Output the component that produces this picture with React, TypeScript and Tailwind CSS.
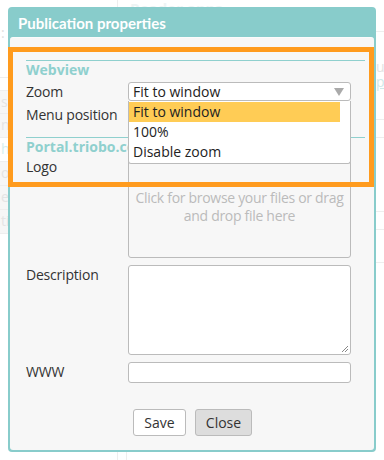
import React from 'react';

// Faint page content behind the modal: only thin slivers show at the edges.
function BackgroundPage() {
  return (
    <div className="flex h-[460px] w-[384px] text-[14px] text-[#e4e4e4]">
      <div className="flex w-[10px] flex-col overflow-hidden pt-[22px]">
        <div className="whitespace-nowrap pl-[1px] text-[#e0e0e0]">: (</div>
        <div className="mt-[34px] h-px bg-[#eeeeee]" />
        <div className="mt-[12px] h-[24px] border-y border-[#eeeeee] bg-[#f6f6f6] pl-[1px] leading-[22px]">s</div>
        <div className="h-[24px] border-b border-[#eeeeee] bg-[#f6f6f6] pl-[1px] leading-[22px]">n</div>
        <div className="h-[24px] border-b border-[#eeeeee] pl-[1px] leading-[22px] text-[#d5eeee]">h</div>
        <div className="h-[24px] border-b border-[#eeeeee] bg-[#f6f6f6] pl-[1px] leading-[22px]">op</div>
        <div className="h-[24px] border-b border-[#eeeeee] bg-[#f6f6f6] pl-[1px] leading-[22px]">er</div>
        <div className="h-[24px] border-b border-[#eeeeee] bg-[#f6f6f6] pl-[1px] leading-[22px]">ti</div>
      </div>
      <div className="flex flex-1 flex-col justify-between">
        <div className="flex h-[16px] items-end">
          <div className="ml-[107px] h-full w-px bg-[#eeeeee]" />
          <div className="ml-[12px] text-[15px] font-bold leading-none text-[#eef4f4]">Reader apps</div>
        </div>
        <div className="flex h-[9px]">
          <div className="ml-[107px] h-full w-px bg-[#eeeeee]" />
          <div className="ml-[8px] h-full w-px bg-[#eeeeee]" />
        </div>
      </div>
      <div className="flex w-[8px] flex-col overflow-hidden">
        <div className="mt-[31px] h-px bg-[#eeeeee]" />
        <div className="mt-[27px] whitespace-nowrap text-[#e4e4e4] leading-[16px]">ub</div>
        <div className="whitespace-nowrap leading-[14px] text-[#cfeaea] underline">pp</div>
        <div className="mt-[30px] h-px bg-[#eeeeee]" />
        <div className="mt-[17px] h-px bg-[#eeeeee]" />
        <div className="mt-[73px] h-px bg-[#eeeeee]" />
        <div className="mt-[17px] h-px bg-[#eeeeee]" />
        <div className="mt-[32px] h-px bg-[#eeeeee]" />
      </div>
    </div>
  );
}

function SectionTitle({ children }: { children: React.ReactNode }) {
  return (
    <div className="overflow-hidden whitespace-nowrap border-t border-[#8fd0ce] pt-px text-[14px] font-bold leading-[16px] text-[#8fd0ce]">
      {children}
    </div>
  );
}

function Row({ label, children, className = '' }: { label: string; children: React.ReactNode; className?: string }) {
  return (
    <div className={`flex ${className}`}>
      <div className="w-[102px] shrink-0 pt-px text-[14px] leading-[18px] tracking-[-0.2px] text-[#333333]">{label}</div>
      <div className="w-[223px] shrink-0">{children}</div>
    </div>
  );
}

function ZoomDropdown() {
  const options = ['Fit to window', '100%', 'Disable zoom'];
  return (
    <div className="absolute left-0 top-[19px] z-10 w-[223px] rounded-b-[3px] border border-t-0 border-[#bbbbbb] bg-white pb-px pt-px">
      {options.map((o, i) => (
        <div
          key={o}
          className={`mr-[10px] h-[20px] pl-[4px] text-[14px] leading-[20px] text-[#222222] ${i === 0 ? 'bg-[#ffcc55]' : ''}`}
        >
          {o}
        </div>
      ))}
    </div>
  );
}

export default function App() {
  return (
    <div className="relative h-[460px] w-[384px] overflow-hidden bg-white font-['Open_Sans','Noto_Sans',sans-serif]">
      <BackgroundPage />

      {/* Modal dialog */}
      <div className="absolute left-[8px] top-[7px] flex h-[445px] w-[368px] flex-col rounded-[4px] bg-[#88cccb] px-[2px] pb-[2px]">
        <div className="flex h-[30px] shrink-0 items-center px-[8px] pt-[3px] font-['Lato',sans-serif] text-[15px] font-bold text-white">
          Publication properties
        </div>
        <div className="flex flex-1 flex-col rounded-[3px] border-t border-[#fbfbfb] bg-[#f7f7f7] px-[16px] pt-[22px]">
          <div className="mr-[-7px]">
            <SectionTitle>Webview</SectionTitle>
          </div>
          <div className="mt-[4px] flex flex-col gap-[4px]">
            <Row label="Zoom">
              <div className="relative">
                <div className="flex h-[19px] items-center justify-between rounded-[3px] border border-[#bbbbbb] bg-white pl-[4px] pr-[6px] text-[14px] text-[#222222]">
                  <span>Fit to window</span>
                  <svg width="10" height="8" viewBox="0 0 10 8">
                    <path d="M0 0h10L5 8z" fill="#aaaaaa" />
                  </svg>
                </div>
                <ZoomDropdown />
              </div>
            </Row>
            <Row label="Menu position">
              <div className="h-[19px] rounded-[3px] border border-[#bbbbbb] bg-white" />
            </Row>
          </div>
          <div className="mr-[-7px] mt-[13px]">
            <SectionTitle>Portal.triobo.com</SectionTitle>
          </div>
          <div className="mt-[2px] flex flex-col">
            <Row label="Logo">
              <div className="flex h-[101px] flex-col items-center rounded-[3px] border border-[#bbbbbb] bg-[#f7f7f7] pt-[31px] text-center text-[14px] leading-[18px] tracking-[-0.3px] text-[#bbbbbb]">
                <span className="whitespace-nowrap">Click for browse your files or drag</span>
                <span className="whitespace-nowrap">and drop file here</span>
              </div>
            </Row>
            <Row label="Description" className="mt-[7px]">
              <div className="relative h-[90px] rounded-[3px] border border-[#bbbbbb] bg-white">
                <svg className="absolute bottom-[1px] right-[1px]" width="8" height="8" viewBox="0 0 8 8">
                  <path d="M7 1L1 7M7 4L4 7" stroke="#888888" strokeWidth="1" />
                </svg>
              </div>
            </Row>
            <Row label="WWW" className="mt-[7px]">
              <div className="h-[21px] rounded-[3px] border border-[#bbbbbb] bg-white" />
            </Row>
          </div>
          <div className="mt-[26px] flex gap-[9px] pl-[107px]">
            <button className="h-[27px] w-[53px] rounded-[3px] border border-[#bbbbbb] bg-white text-[14px] text-[#333333]">
              Save
            </button>
            <button className="h-[27px] w-[57px] rounded-[3px] border border-[#bbbbbb] bg-[#dddddd] text-[14px] text-[#333333]">
              Close
            </button>
          </div>
        </div>
      </div>

      {/* Orange highlight annotation */}
      <div className="pointer-events-none absolute left-[8px] top-[47px] h-[140px] w-[366px] border-[5px] border-[#ff9b1e]" />
    </div>
  );
}
